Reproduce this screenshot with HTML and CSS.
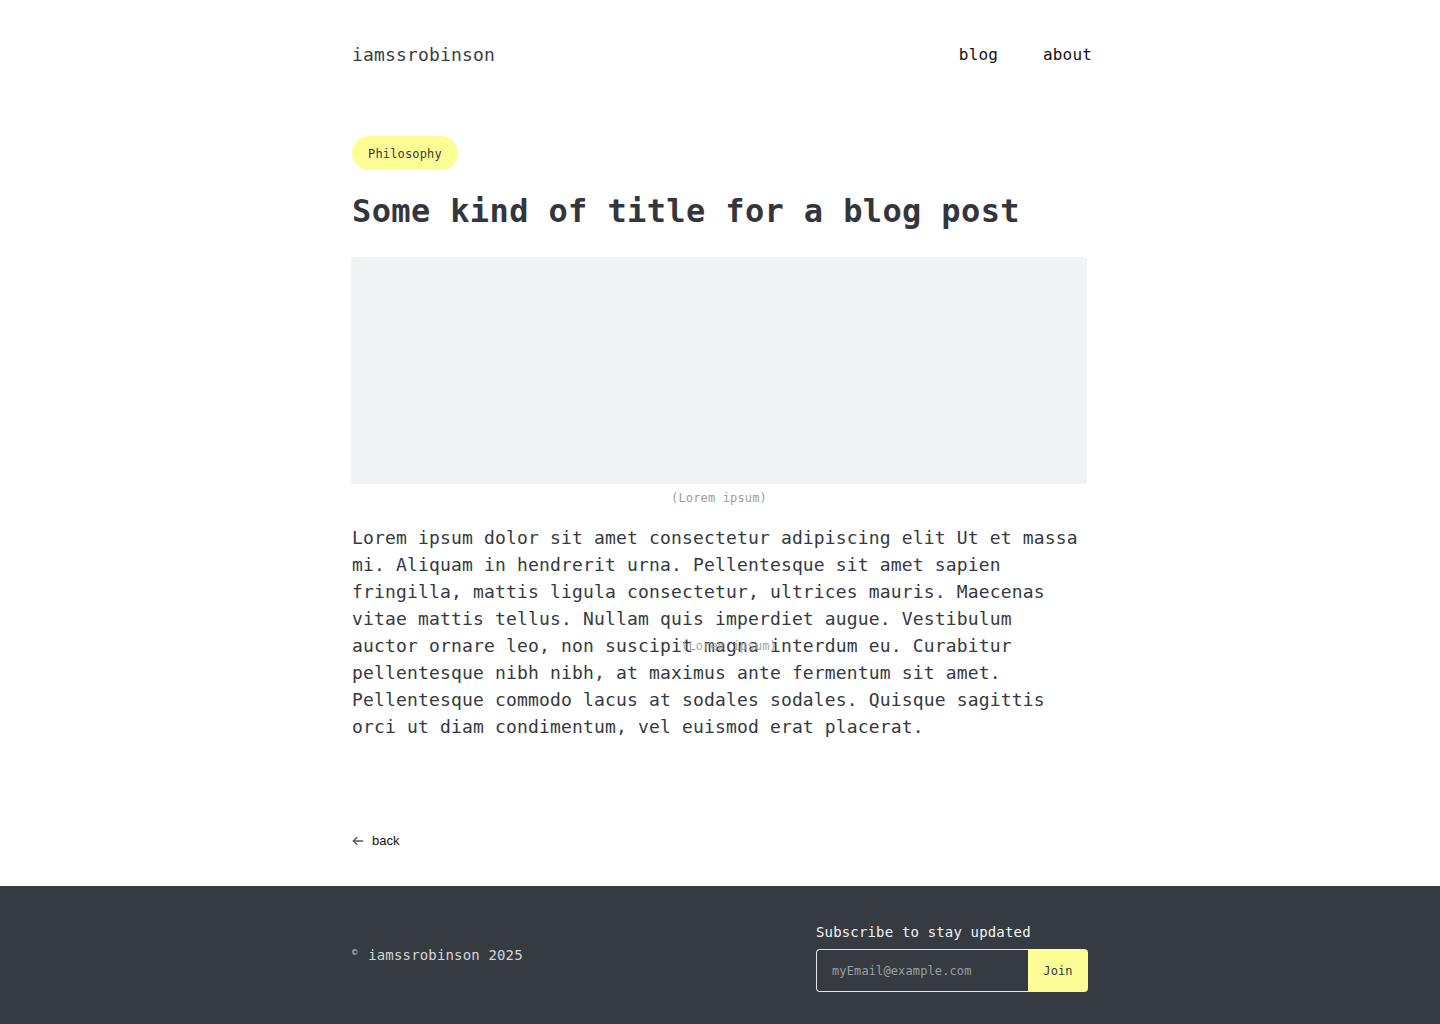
FILE: index.html
```html
<!DOCTYPE html>
<html lang="en">
<head>
<meta charset="utf-8">
<title>Some kind of title for a blog post</title>
<link rel="stylesheet" href="styles.css">
</head>
<body>
<header class="site-header">
  <div class="container header-row">
    <a class="logo" href="#">iamssrobinson</a>
    <nav class="nav">
      <a href="#">blog</a>
      <a href="#">about</a>
    </nav>
  </div>
</header>
<main class="container">
  <article class="post">
    <span class="tag">Philosophy</span>
    <h1 class="title">Some kind of title for a blog post</h1>
    <figure class="figure">
      <div class="image"></div>
      <figcaption class="caption">(Lorem ipsum)</figcaption>
    </figure>
    <div class="body">
      <p>Lorem ipsum dolor sit amet consectetur adipiscing elit Ut et massa mi. Aliquam in hendrerit urna. Pellentesque sit amet sapien fringilla, mattis ligula consectetur, ultrices mauris. Maecenas vitae mattis tellus. Nullam quis imperdiet augue. Vestibulum auctor ornare leo, non suscipit magna interdum eu. Curabitur pellentesque nibh nibh, at maximus ante fermentum sit amet. Pellentesque commodo lacus at sodales sodales. Quisque sagittis orci ut diam condimentum, vel euismod erat placerat.</p>
      <span class="stray-caption">(Lorem ipsum)</span>
    </div>
    <a class="back" href="#">
      <svg width="14" height="14" viewBox="0 0 24 24" fill="none" stroke="#555" stroke-width="2.2" stroke-linecap="round" stroke-linejoin="round"><path d="M20 12H4"/><path d="M10 6l-6 6 6 6"/></svg>
      <span>back</span>
    </a>
  </article>
</main>
<footer class="site-footer">
  <div class="container footer-row">
    <p class="copy"><span class="copy-mark">©</span> iamssrobinson 2025</p>
    <form class="subscribe">
      <label class="sub-label" for="email">Subscribe to stay updated</label>
      <div class="sub-row">
        <input id="email" class="sub-input" type="email" placeholder="myEmail@example.com">
        <button class="sub-btn" type="button">Join</button>
      </div>
    </form>
  </div>
</footer>
</body>
</html>
```

FILE: styles.css
```css
* { box-sizing: border-box; }
html, body { margin: 0; padding: 0; }
body {
  font-family: "DejaVu Sans Mono", "Liberation Mono", monospace;
  letter-spacing: 0.01em;
  color: #36393f;
  background: #fff;
}
a { color: inherit; text-decoration: none; }

.container {
  width: 736px;
  margin: 0 auto;
}

.site-header { padding-top: 41px; }
.header-row {
  display: flex;
  justify-content: space-between;
  align-items: center;
}
.logo {
  font-size: 18px;
  line-height: 27px;
  color: #3a3d44;
}
.nav {
  display: flex;
  gap: 45px;
  margin-right: -4px;
}
.nav a {
  font-size: 16px;
  line-height: 27px;
  color: #111;
}

.post {
  padding-top: 68px;
  display: flex;
  flex-direction: column;
  align-items: flex-start;
}
.tag {
  display: inline-block;
  background: #fdfd96;
  color: #36393f;
  font-size: 12px;
  line-height: 18px;
  padding: 9px 16px 7px;
  border-radius: 17px;
}
.title {
  margin: 21px 0 0;
  font-size: 32px;
  line-height: 40px;
  font-weight: 700;
  letter-spacing: 0.38px;
  color: #33363c;
}
.figure {
  margin: 26px 0 0 -1px;
  width: 736px;
}
.image {
  height: 227px;
  background: #f1f2f4;
  border-radius: 4px;
}
.caption {
  margin-top: 5px;
  text-align: center;
  font-size: 12px;
  line-height: 18px;
  color: #9a9ca1;
}
.body {
  position: relative;
  margin-top: 17px;
}
.body p {
  margin: 0;
  font-size: 18px;
  line-height: 27px;
  color: #36393f;
}
.stray-caption {
  position: absolute;
  left: 329px;
  top: 113px;
  font-size: 12px;
  line-height: 18px;
  color: #a2a4a9;
}
.back {
  margin-top: 91px;
  display: flex;
  align-items: center;
  gap: 7px;
  font-family: "Liberation Sans", Arial, sans-serif;
  letter-spacing: 0;
  font-size: 13px;
  line-height: 20px;
  color: #111;
}
.back svg { margin-left: -1px; }

.site-footer {
  margin-top: 35px;
  background: #363a41;
  padding: 36px 0 32px;
}
.footer-row {
  display: flex;
  justify-content: space-between;
  align-items: center;
}
.copy {
  margin: 0 0 2px;
  font-size: 14px;
  line-height: 20px;
  color: #d4d6da;
}
.copy-mark {
  position: relative;
  top: -5px;
  font-size: 9px;
  margin-right: 2px;
}
.subscribe {
  width: 272px;
  display: flex;
  flex-direction: column;
  gap: 7px;
}
.sub-label {
  font-size: 14px;
  line-height: 20px;
  color: #f3f4f6;
}
.sub-row {
  display: flex;
  height: 43px;
}
.sub-input {
  flex: 1;
  min-width: 0;
  background: transparent;
  border: 1px solid #e5e7eb;
  border-right: none;
  border-radius: 4px 0 0 4px;
  padding: 0 15px;
  font-family: inherit;
  letter-spacing: 0.01em;
  font-size: 12px;
  color: #e5e7eb;
  outline: none;
}
.sub-input::placeholder { color: #9ca0a6; }
.sub-btn {
  width: 60px;
  border: none;
  background: #fdfd96;
  border-radius: 0 4px 4px 0;
  font-family: inherit;
  letter-spacing: 0.01em;
  font-size: 12px;
  color: #36393f;
  cursor: pointer;
}
```
